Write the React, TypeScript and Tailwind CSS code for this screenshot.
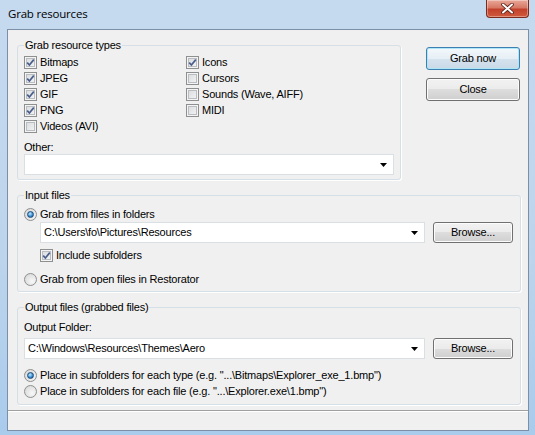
import React from 'react'

const ui = "font-['Liberation_Sans',Arial,sans-serif] text-[11px] tracking-[-0.2px] text-black leading-[13px]"

function Check({ checked }: { checked?: boolean }) {
  return (
    <span className="w-[13px] h-[13px] shrink-0 border border-[#8e8f8f] bg-[linear-gradient(135deg,#d6d8db,#f7f7f7)] shadow-[inset_0_0_0_1px_#f4f4f4,inset_0_0_0_2px_#b9bdc2] flex items-center justify-center">
      {checked && (
        <svg width="9" height="9" viewBox="0 0 9 9">
          <path d="M1.2 4.6 L3.4 7 L7.8 1.6" fill="none" stroke="#4a5e8c" strokeWidth="1.7" />
        </svg>
      )}
    </span>
  )
}

function Radio({ checked }: { checked?: boolean }) {
  return (
    <span className="w-[13px] h-[13px] shrink-0 rounded-full border border-[#8e8f8f] bg-[radial-gradient(circle_at_65%_65%,#f8f8f8,#d3d3d3)] flex items-center justify-center">
      {checked && (
        <span className="w-[7px] h-[7px] rounded-full border border-[#1d4e7c] bg-[radial-gradient(circle_at_40%_35%,#c8ecfc,#3b8fd6_55%,#0f4a86)]" />
      )}
    </span>
  )
}

function CheckRow({ label, checked }: { label: string; checked?: boolean }) {
  return (
    <div className="h-[16px] flex items-center gap-[3px]">
      <Check checked={checked} />
      <span>{label}</span>
    </div>
  )
}

function RadioRow({ label, checked }: { label: string; checked?: boolean }) {
  return (
    <div className="h-[16px] flex items-center gap-[3px]">
      <Radio checked={checked} />
      <span>{label}</span>
    </div>
  )
}

function Combo({ value, className }: { value?: string; className?: string }) {
  return (
    <div className={`h-[21px] bg-white border border-[#dadfe4] flex items-center pl-[3px] pr-[6px] ${className ?? ''}`}>
      <span className="flex-1 whitespace-nowrap overflow-hidden">{value}</span>
      <svg width="7" height="4" viewBox="0 0 7 4">
        <path d="M0 0 H7 L3.5 4 Z" fill="#000" />
      </svg>
    </div>
  )
}

function Btn({ children, isDefault, className }: { children: React.ReactNode; isDefault?: boolean; className?: string }) {
  const look = isDefault
    ? 'border-[#3c7fb1] bg-[linear-gradient(to_bottom,#f3f8fb_0%,#e6eff5_50%,#d5e3ee_50%,#c9d9e6_100%)] shadow-[inset_0_0_0_1px_#aee6f8]'
    : 'border-[#707070] bg-[linear-gradient(to_bottom,#f2f2f2_0%,#ebebeb_50%,#dddddd_50%,#cfcfcf_100%)] shadow-[inset_0_0_0_1px_#fcfcfc]'
  return (
    <div className={`rounded-[3px] border flex items-center justify-center ${look} ${className ?? ''}`}>
      {children}
    </div>
  )
}

function Group({ title, className, children }: { title: string; className?: string; children: React.ReactNode }) {
  return (
    <fieldset className={`border border-[#d5dfe5] rounded-[3px] px-[6px] shadow-[1px_1px_0_#ffffff] ${className ?? ''}`}>
      <legend className="px-[1px] leading-[13px]">{title}</legend>
      {children}
    </fieldset>
  )
}

export default function App() {
  return (
    <div className="w-[535px] h-[435px] overflow-hidden flex flex-col bg-[linear-gradient(to_bottom,#c6daef,#bcd4ec_60%,#a9cbec)]">
      {/* title bar */}
      <div className="h-[29px] flex items-start justify-between">
        <span className="pl-[8px] pt-[6px] font-['Open_Sans',sans-serif] text-[11.5px] tracking-[-0.2px] leading-[16px] text-black">
          Grab resources
        </span>
        <div className="mr-[6px] w-[43px] h-[18px] rounded-b-[4px] border border-t-0 border-[#7d2a1e] bg-[linear-gradient(to_bottom,#e9a899,#d77966_45%,#c2412c_55%,#d05a3c)] shadow-[inset_0_0_0_1px_rgba(255,255,255,0.35)] flex items-center justify-center">
          <svg width="13" height="11" viewBox="0 0 13 11">
            <path d="M2 1.5 L11 9.5 M11 1.5 L2 9.5" stroke="#5a1c14" strokeWidth="3.6" strokeLinecap="round" />
            <path d="M2 1.5 L11 9.5 M11 1.5 L2 9.5" stroke="#ffffff" strokeWidth="2" strokeLinecap="round" />
          </svg>
        </div>
      </div>

      {/* client area */}
      <div className={`ml-[7px] w-[522px] h-[402px] border border-[#7c8fa6] bg-[#f0f0f0] flex flex-col ${ui}`}>
        <div className="flex items-start">
          <Group title="Grab resource types" className="ml-[9px] mt-[9px] w-[384px] pb-[4px]">
            <div className="pt-[2px] grid grid-cols-[162px_1fr]">
              <div className="flex flex-col">
                <CheckRow label="Bitmaps" checked />
                <CheckRow label="JPEG" checked />
                <CheckRow label="GIF" checked />
                <CheckRow label="PNG" checked />
                <CheckRow label="Videos (AVI)" />
              </div>
              <div className="flex flex-col">
                <CheckRow label="Icons" checked />
                <CheckRow label="Cursors" />
                <CheckRow label="Sounds (Wave, AIFF)" />
                <CheckRow label="MIDI" />
              </div>
            </div>
            <div className="mt-[6px] h-[14px] flex items-center">Other:</div>
            <Combo />
          </Group>

          <div className="ml-[25px] mt-[17px] w-[94px] flex flex-col gap-[8px]">
            <Btn isDefault className="h-[23px]">Grab now</Btn>
            <Btn className="h-[23px]">Close</Btn>
          </div>
        </div>

        <Group title="Input files" className="ml-[9px] mt-[9px] w-[504px] pb-[4px]">
          <div className="pt-[4px]">
            <RadioRow label="Grab from files in folders" checked />
          </div>
          <div className="flex items-start">
            <Combo value="C:\Users\fo\Pictures\Resources" className="ml-[16px] w-[385px]" />
            <Btn className="ml-[8px] w-[80px] h-[21px]">Browse...</Btn>
          </div>
          <div className="ml-[16px] mt-[4px]">
            <CheckRow label="Include subfolders" checked />
          </div>
          <div className="mt-[8px]">
            <RadioRow label="Grab from open files in Restorator" />
          </div>
        </Group>

        <Group title="Output files (grabbed files)" className="ml-[9px] mt-[9px] w-[504px] pb-[5px]">
          <div className="pt-[6px] h-[20px] flex items-center">Output Folder:</div>
          <div className="mt-[4px] flex items-start">
            <Combo value="C:\Windows\Resources\Themes\Aero" className="w-[401px]" />
            <Btn className="ml-[8px] w-[80px] h-[21px]">Browse...</Btn>
          </div>
          <div className="mt-[8px]">
            <RadioRow label={'Place in subfolders for each type (e.g. "...\\Bitmaps\\Explorer_exe_1.bmp")'} checked />
            <RadioRow label={'Place in subfolders for each file (e.g. "...\\Explorer.exe\\1.bmp")'} />
          </div>
        </Group>

        {/* status bar */}
        <div className="mt-auto h-[20px] border-t border-[#a0a0a0] shadow-[inset_0_1px_0_#ffffff]" />
      </div>
    </div>
  )
}
